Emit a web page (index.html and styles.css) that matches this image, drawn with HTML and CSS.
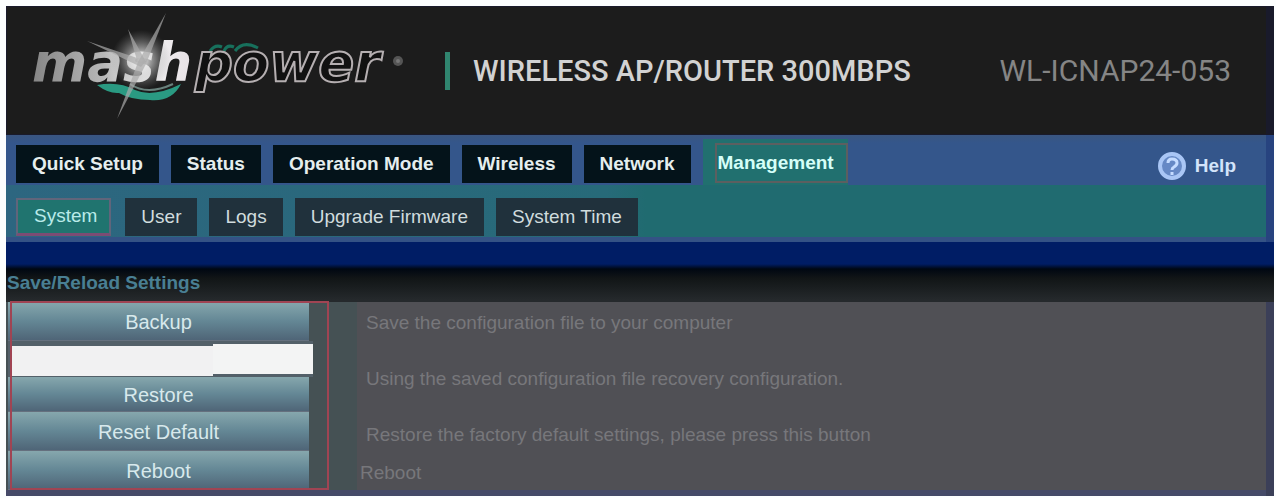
FILE: index.html
```
<!DOCTYPE html>
<html lang="en">
<head>
    <meta charset="UTF-8">
    <meta name="viewport" content="width=device-width, initial-scale=1.0">
    <title>Wireless AP/Router 300Mbps</title>
    <link rel="stylesheet" href="styles.css">
</head>
<body>
    <div class="router">
        <header class="header">
            <svg class="logo" width="384" height="129" viewBox="0 0 384 129" role="img" aria-label="mashpower">
                <defs>
                    <linearGradient id="silver" x1="0" x2="1">
                        <stop offset="0" stop-color="#858585"/>
                        <stop offset=".45" stop-color="#b8b8b8"/>
                        <stop offset=".7" stop-color="#f4f4f4"/>
                        <stop offset="1" stop-color="#e8e2e6"/>
                    </linearGradient>
                    <radialGradient id="glow">
                        <stop offset="0" stop-color="#fff"/>
                        <stop offset=".3" stop-color="#ddd" stop-opacity=".7"/>
                        <stop offset="1" stop-color="#888" stop-opacity="0"/>
                    </radialGradient>
                </defs>
                <path d="M90 79 Q112 75 128 84 Q146 92 174 78 Q165 96 143 94 Q124 94 112 87 Q102 88 90 79Z" fill="#2a9a82"/>
                <path d="M123 78 Q140 90 166 78" fill="none" stroke="#69817c" stroke-width="2"/>
                <path d="M203 45 Q208 38 215 41 M217 45 Q220 38 227 41 M228 45 Q236 34 251 42" fill="none" stroke="#17705c" stroke-width="3"/>
                <text class="logo-mash" x="25" y="75">mash</text>
                <text class="logo-power" x="188" y="75">power</text>
                <circle cx="134" cy="54" r="30" fill="url(#glow)"/>
                <path d="M159 7 L139 58 L110 113 L131 56Z" fill="#aaa" opacity=".7"/>
                <path d="M80 35 L139 55 L134 61Z M121 23 L139 56 L131 58Z" fill="#aaa" opacity=".7"/>
                <circle cx="391" cy="55" r="5" fill="#555"/>
                <circle cx="391" cy="55" r="2" fill="#777"/>
            </svg>
            <h1 class="product">WIRELESS AP/ROUTER 300MBPS</h1>
            <span class="model">WL-ICNAP24-053</span>
        </header>

        <div class="menus">
            <nav class="main-menu" aria-label="Main">
                <a class="tab" href="#setup">Quick Setup</a>
                <a class="tab" href="#status">Status</a>
                <a class="tab" href="#mode">Operation Mode</a>
                <a class="tab" href="#wireless">Wireless</a>
                <a class="tab" href="#network">Network</a>
                <span class="current-tab"><a href="#management" aria-current="page">Management</a></span>
                <a class="help" href="#help">
                    <svg width="30" height="30" viewBox="0 0 30 30" aria-hidden="true">
                        <circle cx="15" cy="15" r="12" fill="#6689c5" stroke="#a9c6f5" stroke-width="4"/>
                        <path d="M11 12 Q11 8 15 8 Q20 8 20 12 Q20 14 17 16 Q15 17 15 19 M15 21 V24" fill="none" stroke="#c5dcff" stroke-width="3"/>
                    </svg>
                    Help
                </a>
            </nav>
            <nav class="sub-menu" aria-label="Management">
                <a class="sub-tab active" href="#system" aria-current="page">System</a>
                <a class="sub-tab" href="#user">User</a>
                <a class="sub-tab" href="#logs">Logs</a>
                <a class="sub-tab" href="#firmware">Upgrade Firmware</a>
                <a class="sub-tab" href="#time">System Time</a>
            </nav>
        </div>

        <main class="content">
            <h2 class="section-title">Save/Reload Settings</h2>
            <div class="settings">
                <div class="actions">
                    <button type="button" class="action">Backup</button>
                    <div class="file-row">
                        <input type="text" class="file-name" aria-label="Configuration file">
                        <button type="button" class="browse" aria-label="Browse"></button>
                    </div>
                    <button type="button" class="action restore">Restore</button>
                    <button type="button" class="action">Reset Default</button>
                    <button type="button" class="action">Reboot</button>
                </div>
                <div class="notes">
                    <p>Save the configuration file to your computer</p>
                    <p>Using the saved configuration file recovery configuration.</p>
                    <p>Restore the factory default settings, please press this button</p>
                    <p class="last">Reboot</p>
                </div>
            </div>
        </main>
    </div>
</body>
</html>
```
FILE: styles.css
```
* {
    box-sizing: border-box;
}

body {
    margin: 0;
    padding: 6px 2px 2px 6px;
    background: #fcfefe;
    font-family: "Liberation Sans", Arial, sans-serif;
    font-size: 19px;
}

a {
    color: inherit;
    text-decoration: none;
}

h1, h2, p {
    margin: 0;
}

button, input {
    border: 0;
    border-radius: 0;
    font: inherit;
}

.router {
    background: #27437f;
}

.header {
    display: flex;
    align-items: center;
    height: 129px;
    padding-right: 35px;
    background: #1c1c1c;
    border: 1px solid #191a2b;
    border-right-width: 8px;
    font-family: Roboto, sans-serif;
}

.logo {
    flex: none;
    overflow: visible;
}

.logo text {
    font-family: "DejaVu Sans", sans-serif;
    font-size: 53px;
    font-style: italic;
    font-weight: bold;
}

.logo-mash {
    fill: url(#silver);
}

.logo-power {
    fill: #111;
    stroke: #b5afb1;
    stroke-width: 2px;
}

.product {
    margin-left: 54px;
    padding-left: 23px;
    border-left: 5px solid #30856f;
    color: #d2d2d2;
    font-size: 29px;
    font-weight: 500;
    line-height: 38px;
    white-space: nowrap;
}

.model {
    margin-left: auto;
    color: #858585;
    font-size: 30px;
    white-space: nowrap;
}

.menus {
    margin-right: 8px;
    border-bottom: 5px solid #345285;
    background: #216b70;
}

.main-menu {
    display: flex;
    align-items: flex-start;
    gap: 12px;
    height: 50px;
    padding: 10px 30px 0 10px;
    background: linear-gradient(#3a5680, #34568b 8px);
    color: #e6eeee;
    font-weight: bold;
}

.tab {
    padding: 0 16px;
    background: #04131a;
    line-height: 38px;
}

.current-tab {
    align-self: stretch;
    margin-top: -6px;
    padding: 4px 0 0 12px;
    background: #21706f;
    color: #d5fff8;
}

.current-tab a {
    display: block;
    padding: 0 12px 0 1px;
    border: 2px solid #5c5f60;
    line-height: 36px;
}

.help {
    display: flex;
    align-items: center;
    gap: 8px;
    margin-left: auto;
    padding-top: 6px;
    color: #d3e4fa;
}

.sub-menu {
    display: flex;
    gap: 12px;
    padding: 13px 10px 1px;
    background: linear-gradient(90deg, #2d6680, #276a79 600px, #206b70 640px);
    color: #d0dcde;
}

.sub-tab {
    padding: 0 16px;
    background: #20313c;
    line-height: 38px;
}

.active {
    margin-right: 2px;
    padding: 0 12px 0 16px;
    border: 2px solid #61657b;
    border-bottom: 3px solid #7c4c74;
    background: #20746f;
    color: #b9ebe9;
    line-height: 32px;
}

.content {
    background: #3b3f58;
}

.section-title {
    height: 60px;
    padding: 30px 0 0 1px;
    background: linear-gradient(#001d65 22px, #000712 27px, #111516 36px, #25292c 58px);
    color: #497f93;
    font-size: 19px;
    line-height: 22px;
}

.settings {
    display: flex;
    margin-right: 8px;
    border-bottom: 6px solid #454a68;
    background: #505055;
}

.actions {
    position: relative;
    display: flex;
    flex-direction: column;
    flex: none;
    width: 351px;
    padding: 0 48px 0 2px;
    background: #455154;
}

/* red frame over the buttons */
.actions::after {
    content: "";
    position: absolute;
    inset: -1px 28px 0 4px;
    border: 2px solid #a04453;
    pointer-events: none;
}

.action {
    height: 39px;
    padding: 2px 0 0;
    border-bottom: 1px solid #65707e;
    background: linear-gradient(#86a7ad, #648795 50%, #4f6577);
    color: #d8e9ec;
    font-size: 20px;
}

.restore {
    height: 35px;
}

.file-row {
    display: flex;
    align-items: flex-start;
    height: 36px;
    margin-right: -4px;
    padding: 3px 0 0 2px;
    background: #536069;
}

.file-name {
    flex: 1;
    min-width: 0;
    height: 30px;
    margin-top: 2px;
    background: #f1f1f2;
}

.browse {
    width: 100px;
    height: 30px;
    background: #f3f4f4;
}

.notes {
    display: flex;
    flex-direction: column;
    gap: 34px;
    padding: 10px 9px 0;
    color: #77777b;
    line-height: 22px;
}

.notes .last {
    margin: -18px 0 0 -6px;
}
```
